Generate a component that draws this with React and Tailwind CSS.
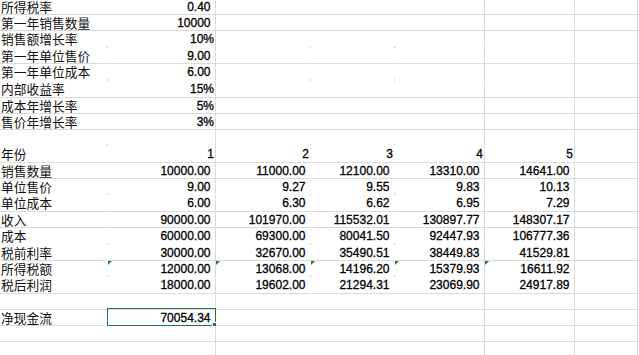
import React from 'react';

const H = { 15: 'h-[15px]', 16: 'h-[16px]', 17: 'h-[17px]' };
const RIGHT_LINE = [false, true, false, false, true, true, true, false];

// [height, bottom line visible, label, ...values]
const rows = [
  [15, true, '所得税率', '0.40'],
  [16, true, '第一年销售数量', '10000'],
  [17, false, '销售额增长率', '10%'],
  [16, true, '第一年单位售价', '9.00'],
  [17, false, '第一年单位成本', '6.00'],
  [17, true, '内部收益率', '15%'],
  [16, true, '成本年增长率', '5%'],
  [16, true, '售价年增长率', '3%'],
  [16, false],
  [17, true, '年份', '1', '2', '3', '4', '5'],
  [16, true, '销售数量', '10000.00', '11000.00', '12100.00', '13310.00', '14641.00'],
  [16, false, '单位售价', '9.00', '9.27', '9.55', '9.83', '10.13'],
  [17, true, '单位成本', '6.00', '6.30', '6.62', '6.95', '7.29'],
  [16, true, '收入', '90000.00', '101970.00', '115532.01', '130897.77', '148307.17'],
  [17, false, '成本', '60000.00', '69300.00', '80041.50', '92447.93', '106777.36'],
  [16, true, '税前利率', '30000.00', '32670.00', '35490.51', '38449.83', '41529.81'],
  [16, false, '所得税额', '12000.00', '13068.00', '14196.20', '15379.93', '16611.92'],
  [17, true, '税后利润', '18000.00', '19602.00', '21294.31', '23069.90', '24917.89'],
  [16, true],
  [16, true, '净现金流', '70054.34'],
  [16, true],
  [17, true],
];

function Cell({ col, line, text, tight, flag, selected }) {
  const border = [
    'relative flex items-center border-r border-b',
    RIGHT_LINE[col] ? 'border-r-[#dadada]' : 'border-r-transparent',
    line ? 'border-b-[#dadada]' : 'border-b-transparent',
  ].join(' ');

  return (
    <div className={border}>
      {col === 0 ? (
        <span className="block pl-[1px] whitespace-nowrap font-['Noto_Sans_CJK_SC',sans-serif] text-[12.75px] leading-[14px] text-[#111]">
          {text}
        </span>
      ) : (
        <span className={`block ml-auto whitespace-nowrap text-[12px] leading-[14px] [-webkit-text-stroke:0.3px_#000] ${tight ? 'pr-[1px]' : 'pr-[4.5px]'}`}>
          {text}
        </span>
      )}

      {/* little gridline stubs where the fill hides the lines */}
      {!line && !RIGHT_LINE[col] && col < 4 && (
        <span className="absolute right-[-1px] bottom-[-1px] w-px h-[2px] bg-[#cfcfcf]" />
      )}

      {flag && (
        <span className="absolute top-0 left-0 w-0 h-0 border-t-[4px] border-t-[#1d7f3a] border-r-[4px] border-r-transparent" />
      )}

      {selected && (
        <span className="absolute left-[-1px] top-[-2px] right-[-1px] bottom-[-1px] border border-[#217346]">
          <span className="absolute right-[-2px] bottom-[-2px] w-[5px] h-[5px] bg-[#217346] border border-white" />
        </span>
      )}
    </div>
  );
}

export default function App() {
  return (
    <div className="w-[639px] h-[355px] overflow-hidden bg-white text-black font-['Liberation_Sans','Noto_Sans_CJK_SC',sans-serif]">
      {rows.map(([h, line, label, ...values], r) => (
        <div key={r} className={`grid grid-cols-[108px_108px_95px_84px_90px_90px_63px_1fr] ${H[h]}`}>
          {Array.from({ length: 8 }).map((_, c) => {
            const text = c === 0 ? label : values[c - 1];
            const tight = r === 9 || (text && text.endsWith('%'));
            return (
              <Cell
                key={c}
                col={c}
                line={line}
                text={text}
                tight={tight}
                flag={label === '所得税额' && c >= 1 && c <= 5}
                selected={label === '净现金流' && c === 1}
              />
            );
          })}
        </div>
      ))}
    </div>
  );
}
